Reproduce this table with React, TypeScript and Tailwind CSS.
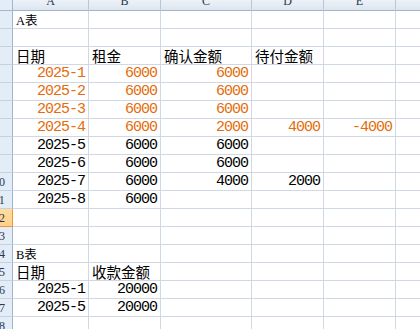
import React from "react";

const COLS = [
  { l: "A", w: "w-[76px]" },
  { l: "B", w: "w-[72px]" },
  { l: "C", w: "w-[91px]" },
  { l: "D", w: "w-[72px]" },
  { l: "E", w: "w-[72px]" },
  { l: "F", w: "w-[72px]" },
];

type Kind = "num" | "big" | "small";
type C = { t: string; k: Kind; o?: boolean } | null;

const O = true;
const n = (t: string, o?: boolean): C => ({ t, k: "num", o });
const b = (t: string): C => ({ t, k: "big" });
const s = (t: string): C => ({ t, k: "small" });

const ROWS: C[][] = [
  [s("A表")],
  [],
  [b("日期"), b("租金"), b("确认金额"), b("待付金额")],
  [n("2025-1", O), n("6000", O), n("6000", O)],
  [n("2025-2", O), n("6000", O), n("6000", O)],
  [n("2025-3", O), n("6000", O), n("6000", O)],
  [n("2025-4", O), n("6000", O), n("2000", O), n("4000", O), n("-4000", O)],
  [n("2025-5"), n("6000"), n("6000")],
  [n("2025-6"), n("6000"), n("6000")],
  [n("2025-7"), n("6000"), n("4000"), n("2000")],
  [n("2025-8"), n("6000")],
  [],
  [],
  [s("B表")],
  [b("日期"), b("收款金额")],
  [n("2025-1"), n("20000")],
  [n("2025-5"), n("20000")],
  [],
];

function Cell({ c, w }: { c: C; w: string }) {
  let inner: React.ReactNode = null;
  if (c) {
    const color = c.o ? "text-[#e46c0a]" : "text-black";
    if (c.k === "num") {
      inner = (
        <div
          className={`w-full text-right pr-[3px] leading-none text-[15px] tracking-[-1px] whitespace-nowrap pb-[1px] ${color}`}
          style={{ fontFamily: '"Liberation Mono", monospace' }}
        >
          {c.t}
        </div>
      );
    } else if (c.k === "big") {
      inner = (
        <div
          className="w-full pl-[3px] leading-none text-[14.5px] whitespace-nowrap text-black pb-[1px]"
          style={{ fontFamily: '"Noto Sans CJK SC", sans-serif' }}
        >
          {c.t}
        </div>
      );
    } else {
      inner = (
        <div
          className="w-full pl-[3px] leading-none text-[12.5px] whitespace-nowrap text-black pb-[1px]"
          style={{ fontFamily: '"Liberation Serif", "Noto Sans CJK SC", serif' }}
        >
          {c.t}
        </div>
      );
    }
  }
  return (
    <div className={`${w} shrink-0 h-[18px] border-r border-b border-[#d0d7e5] flex items-end overflow-visible`}>
      {inner}
    </div>
  );
}

export default function App() {
  return (
    <div className="w-[420px] h-[329px] overflow-hidden bg-white">
      <div className="flex flex-col w-[600px]">
        {/* column header */}
        <div className="flex h-[11px]">
          <div className="w-[13px] shrink-0 h-[11px] bg-[#e4ecf7] border-r border-b border-[#9eb6ce]" />
          {COLS.map((col) => (
            <div
              key={col.l}
              className={`${col.w} shrink-0 h-[11px] overflow-hidden flex items-end justify-center pb-[3px] bg-gradient-to-b from-[#edf2f8] to-[#dde5ef] border-r border-b border-r-[#b7c8dc] border-b-[#9eb6ce]`}
            >
              <span
                className="leading-none text-[12px] text-[#27384b]"
                style={{ fontFamily: '"Liberation Serif", serif' }}
              >
                {col.l}
              </span>
            </div>
          ))}
        </div>
        {ROWS.map((row, ri) => {
          const sel = ri === 11;
          const num = ri + 1;
          return (
            <div key={ri} className="flex">
              <div
                className={`w-[13px] shrink-0 h-[18px] overflow-hidden flex justify-end items-center border-r border-b ${
                  sel
                    ? "bg-gradient-to-b from-[#ffdca0] to-[#ffd08a] border-[#f29536]"
                    : "bg-[#e4ecf7] border-r-[#9eb6ce] border-b-[#c5d2e3]"
                }`}
              >
                <span
                  className="w-[26px] shrink-0 text-center leading-none text-[12px] text-[#27384b]"
                  style={{ fontFamily: '"Liberation Serif", serif' }}
                >
                  {num >= 10 ? num : ""}
                </span>
              </div>
              {COLS.map((col, ci) => (
                <Cell key={ci} c={row[ci] ?? null} w={col.w} />
              ))}
            </div>
          );
        })}
      </div>
    </div>
  );
}
